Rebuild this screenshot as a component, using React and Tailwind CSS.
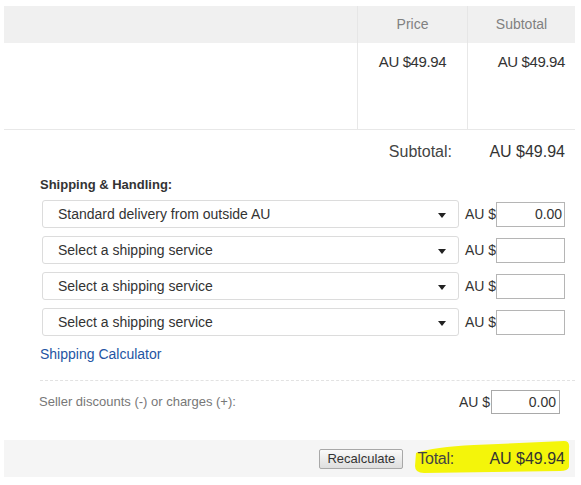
import React from "react";

const font = { fontFamily: '"Liberation Sans", Arial, sans-serif' };

const ShipRow = ({ label, value }) => (
  <div className="flex items-center h-[28px] ml-[2px]">
    <div className="relative flex items-center w-[417px] h-[28px] border border-[#dcdcdc] rounded-[3px] bg-white pl-[15px] text-[14px] text-[#333]">
      {label}
      <span className="absolute right-[12px] top-[12px] w-0 h-0 border-l-[4px] border-r-[4px] border-t-[5px] border-l-transparent border-r-transparent border-t-[#222]"></span>
    </div>
    <span className="ml-[6px] text-[14px] text-[#333]">AU $</span>
    <div className="w-[69px] h-[25px] border border-[#b5b5b5] bg-white flex items-center justify-end pr-[2px] text-[14px] text-[#333]">
      {value}
    </div>
  </div>
);

export default function App() {
  return (
    <div className="relative w-[581px] h-[485px] bg-white pt-[6px] pl-[4px] pr-[6px]" style={font}>
      {/* item table */}
      <div className="flex h-[37px] bg-[#f0f0f0] text-[14px] text-[#808080]">
        <div className="w-[353px]"></div>
        <div className="w-[110px] border-l border-[#e6e6e6] flex items-center justify-center">Price</div>
        <div className="w-[108px] border-l border-[#e6e6e6] flex items-center justify-center">Subtotal</div>
      </div>
      <div className="flex h-[87px] border-b border-[#e8e8e8] text-[15px] tracking-[-0.4px] text-[#333]">
        <div className="w-[353px]"></div>
        <div className="w-[110px] border-l border-[#e8e8e8] text-center pt-[8px]">AU $49.94</div>
        <div className="w-[108px] border-l border-[#e8e8e8] text-right pr-[10px] pt-[8px]">AU $49.94</div>
      </div>

      <div className="flex justify-end items-center h-[44px] text-[16px]">
        <span className="text-[#444]">Subtotal:</span>
        <span className="w-[123px] text-right pr-[10px] text-[#333]">AU $49.94</span>
      </div>

      {/* shipping */}
      <div className="pl-[36px]">
        <div className="mt-[3px] leading-[16px] text-[13px] font-bold text-[#333]">Shipping &amp; Handling:</div>
        <div className="mt-[7px] flex flex-col gap-[8px]">
          <ShipRow label="Standard delivery from outside AU" value="0.00" />
          <ShipRow label="Select a shipping service" value="" />
          <ShipRow label="Select a shipping service" value="" />
          <ShipRow label="Select a shipping service" value="" />
        </div>
        <div className="mt-[10px] leading-[16px] text-[14px] text-[#2454a3]">Shipping Calculator</div>
        <div className="mt-[18px] border-t border-dashed border-[#e2e2e2]"></div>
        <div className="mt-[9px] flex items-center h-[24px] pr-[15px]">
          <span className="-ml-[1px] text-[13px] text-[#777]">Seller discounts (-) or charges (+):</span>
          <span className="ml-auto text-[14px] text-[#333]">AU $</span>
          <div className="ml-[1px] w-[69px] h-[24px] border border-[#a9a9a9] bg-white flex items-center justify-end pr-[3px] text-[14px] text-[#333]">
            0.00
          </div>
        </div>
      </div>

      {/* total bar */}
      <div className="relative mt-[26px] h-[37px] bg-[#f5f5f5] flex items-center justify-end pr-[10px]">
        <svg className="absolute left-0 top-0" width="571" height="37" viewBox="0 0 571 37">
          <path d="M412,13 Q430,7 470,5 L560,1 Q566,1 565,8 L565,27 Q564,31 556,31 L420,33 Q411,33 411,26 Z" fill="#f4f50a" />
        </svg>
        <button className="relative h-[20px] w-[84px] border border-[#a8a8a8] rounded-[2px] bg-gradient-to-b from-[#fafafa] to-[#dedede] text-[13px] text-[#333] leading-none">
          Recalculate
        </button>
        <span className="relative ml-[14px] w-[72px] text-[16px] tracking-[-0.3px] text-[#444]">Total:</span>
        <span className="relative text-[16px] text-[#333]">AU $49.94</span>
      </div>
    </div>
  );
}
